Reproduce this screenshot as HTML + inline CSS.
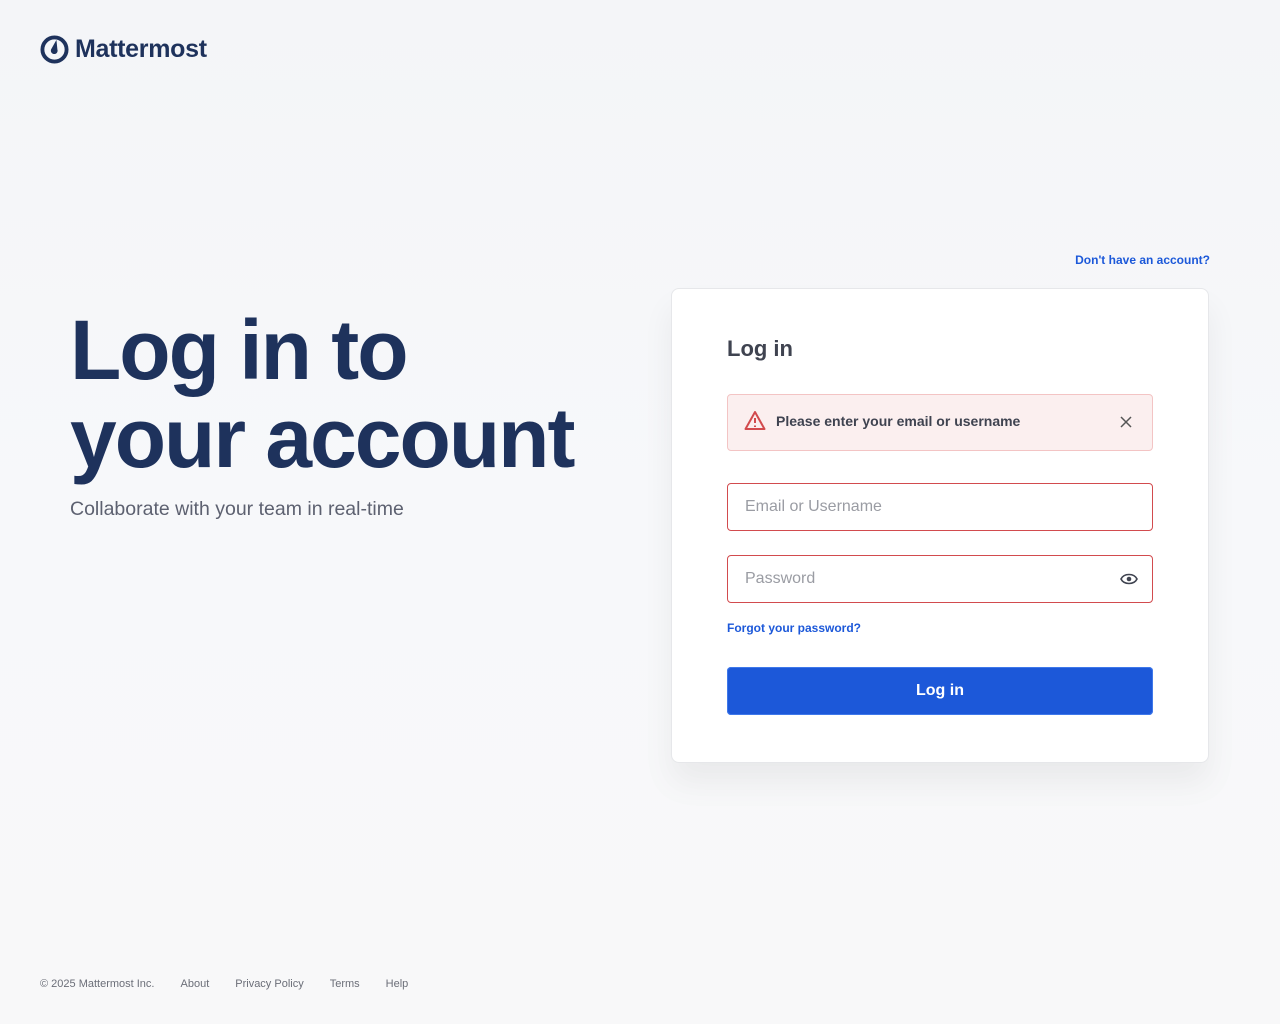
<!DOCTYPE html>
<html><head><meta charset="utf-8"><style>
body{margin:0;width:1280px;height:1024px;overflow:hidden;font-family:"Liberation Sans",sans-serif;background:linear-gradient(180deg,#f4f5f8 0%,#f7f8fa 50%,#f8f8f9 100%);position:relative;color:#3f4350}
.logo{position:absolute;left:40px;top:35px;display:flex;align-items:center;gap:6px;color:#1e325c;font-weight:bold;font-size:25px;letter-spacing:-0.3px}
h1{position:absolute;left:70px;top:306px;margin:0;font-size:84px;line-height:88px;color:#1e325c;font-weight:bold;letter-spacing:-2px}
.sub{position:absolute;left:70px;top:498px;font-size:19.5px;color:#5d6170}
.signup{position:absolute;right:70px;top:253px;font-size:12px;color:#1c58d9;font-weight:bold}
.card{position:absolute;left:671px;top:288px;width:538px;height:475px;background:#fff;border:1px solid #e6e7ea;border-radius:8px;box-shadow:0 20px 32px rgba(0,0,0,.06);box-sizing:border-box}
.title{position:absolute;left:55px;top:47px;font-size:22px;font-weight:bold;color:#3f4350}
.alert{position:absolute;left:55px;top:105px;width:426px;height:57px;box-sizing:border-box;background:#fbefef;border:1px solid #f3c4c4;border-radius:4px}
.alert span{position:absolute;left:48px;top:18px;font-size:14px;font-weight:bold;color:#3f4350}
.inp{position:absolute;left:55px;width:426px;height:48px;box-sizing:border-box;border:1px solid #d24b4e;border-radius:4px;font-size:16px;color:#9a9ca3;padding:14px 17px}
.forgot{position:absolute;left:55px;top:332px;font-size:12px;color:#1c58d9;font-weight:bold}
.btn{position:absolute;left:55px;top:378px;width:426px;height:48px;background:#1c58d9;border-radius:4px;color:#fff;font-size:16px;font-weight:bold;text-align:center;line-height:48px;box-shadow:inset 0 0 0 1px #3f78ea}
.foot{position:absolute;top:978px;left:40px;font-size:11px;color:#6b6e78}
.foot span{margin-right:26px}
</style></head><body>
<div class="logo"><svg width="29" height="29" viewBox="0 0 30 30"><circle cx="15" cy="15" r="12.5" fill="none" stroke="#1e325c" stroke-width="4"/><path d="M17 5 L18 15 A3.5 3.5 0 1 1 12 14 Z" fill="#1e325c"/></svg>Mattermost</div>
<h1>Log in to<br>your account</h1>
<div class="sub">Collaborate with your team in real-time</div>
<div class="signup">Don't have an account?</div>
<div class="card">
<div class="title">Log in</div>
<div class="alert"><svg style="position:absolute;left:16px;top:15px" width="22" height="21" viewBox="0 0 22 21"><path d="M11 2 L20.5 19 H1.5 Z" fill="none" stroke="#d24b4e" stroke-width="2" stroke-linejoin="round"/><path d="M11 8v5M11 15.5v1.5" stroke="#d24b4e" stroke-width="2"/></svg><span>Please enter your email or username</span><svg style="position:absolute;right:20px;top:21px" width="12" height="12" viewBox="0 0 12 12"><path d="M1 1L11 11M11 1L1 11" stroke="#555" stroke-width="1.5"/></svg></div>
<div class="inp" style="top:194px">Email or Username</div>
<div class="inp" style="top:266px">Password<svg style="position:absolute;right:14px;top:17px" width="18" height="12" viewBox="0 0 18 12"><path d="M1 6C4 0 14 0 17 6C14 12 4 12 1 6Z" fill="none" stroke="#3f4350" stroke-width="1.6"/><circle cx="9" cy="6" r="2.3" fill="#3f4350"/></svg></div>
<div class="forgot">Forgot your password?</div>
<div class="btn">Log in</div>
</div>
<div class="foot"><span>© 2025 Mattermost Inc.</span><span>About</span><span>Privacy Policy</span><span>Terms</span><span>Help</span></div>
</body></html>
